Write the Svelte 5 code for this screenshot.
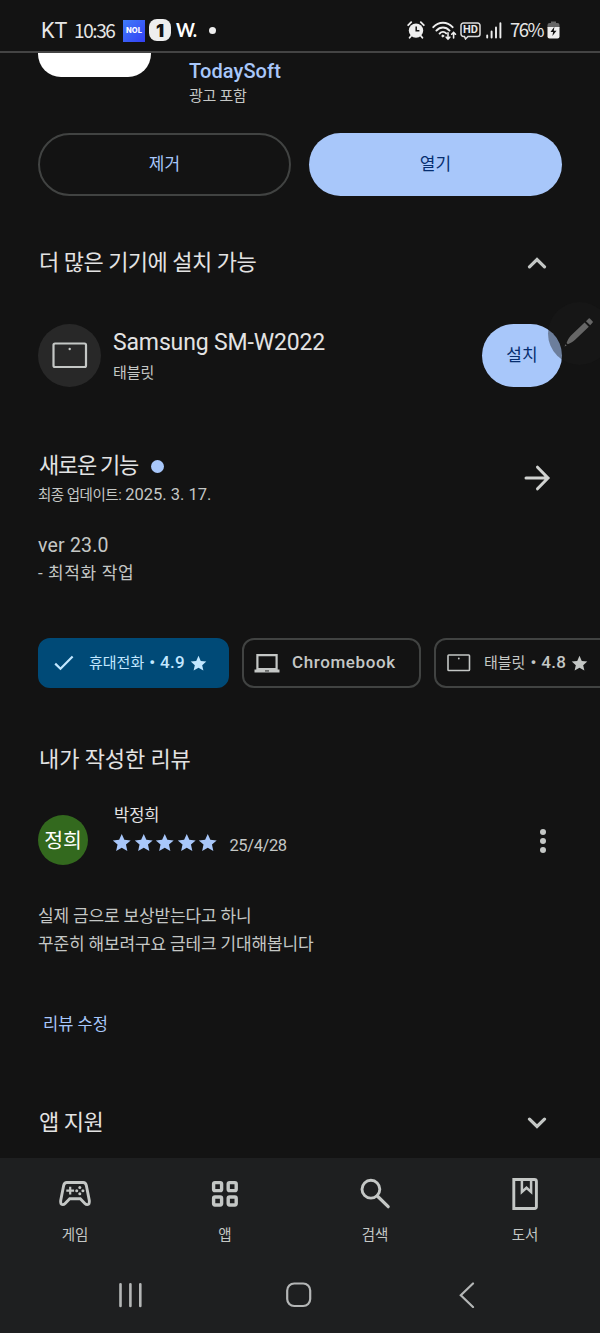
<script lang="ts">
	const starPath = 'M12 1.2l3.2 7.1 7.8.8-5.800 5.200 1.700 7.700L12 18l-6.900 4 1.700-7.700L1 9.100l7.800-.8z';

	const review = {
		initials: '정희',
		name: '박정희',
		rating: 5,
		date: '25/4/28',
		lines: ['실제 금으로 보상받는다고 하니', '꾸준히 해보려구요 금테크 기대해봅니다']
	};

	const tabs = [
		{ id: 'games', label: '게임' },
		{ id: 'apps', label: '앱' },
		{ id: 'search', label: '검색' },
		{ id: 'books', label: '도서' }
	];

	let devicesOpen = $state(true);
	let supportOpen = $state(false);
</script>

{#snippet star(size: number)}
	<svg class="star" width={size} height={size} viewBox="0 0 24 24" fill="currentColor">
		<path d={starPath} />
	</svg>
{/snippet}

{#snippet chevron(up: boolean)}
	<svg width="20" height="12" viewBox="0 0 20 12" fill="none" stroke="currentColor" stroke-width="3.2">
		<path d={up ? 'M2.5 9.800l7.500-7.300 7.500 7.300' : 'M2.5 2.200l7.500 7.300 7.500-7.300'} stroke-linecap="round" />
	</svg>
{/snippet}

<div class="screen">
	<header class="status-bar">
		<span class="carrier">KT</span>
		<span class="clock">10:36</span>
		<span class="nol">NOL</span>
		<span class="one">1</span>
		<span class="w">W.</span>
		<span class="more-dot"></span>

		<div class="status-right">
			<svg class="alarm" width="18" height="18" viewBox="0 0 18 18">
				<circle cx="9" cy="9.600" r="7.200" fill="#eee" />
				<path d="M1.200 4.200l3-3M16.800 4.200l-3-3M4 15l-1.400 1.800M14 15l1.400 1.800" stroke="#eee" stroke-width="1.800" stroke-linecap="round" />
				<path d="M9.200 5.600v4.200h3.200" fill="none" stroke="#131313" stroke-width="1.500" />
			</svg>
			<svg class="wifi" width="25" height="20" viewBox="0 0 25 20" fill="none" stroke="#eee" stroke-width="1.900" stroke-linecap="round">
				<path d="M1.300 6.200c5.400-6 13.900-6 19.300 0M4.400 9.600c3.700-4.200 9.500-4.200 13.100 0M7.600 12.600c1.900-2.200 4.800-2.200 6.600-.2" />
				<circle cx="10.800" cy="15" r="1" fill="#eee" stroke-width=".8" />
				<path d="M16 11.800v6M14.200 16.200l1.800 1.900 1.800-1.900M21.600 17v-5.600M19.700 13.200l1.900-1.900 1.900 1.900" stroke-width="1.600" />
			</svg>
			<span class="hd">
				<svg width="21" height="18" viewBox="0 0 21 18" fill="none" stroke="#ddd" stroke-width="1.500">
					<path d="M3.500 1h14a2.500 2.500 0 012.500 2.500v8.500a2.500 2.500 0 01-2.500 2.500H8l-2.500 2.500-1-2.500h-1A2.500 2.500 0 011 12V3.500A2.500 2.500 0 013.500 1z" />
				</svg>
				<b>HD</b>
			</span>
			<svg class="signal" width="16" height="17" viewBox="0 0 16 17" stroke="#eee" stroke-width="1.900" stroke-linecap="round">
				<path d="M1.200 13.500v2M5.600 9.500v6M10 5.500v10M14.400 1.200v14.300" />
			</svg>
			<span class="percent">76%</span>
			<svg class="battery" width="13" height="18" viewBox="0 0 13 18">
				<path d="M4 2V.6h5V2h1.500A2 2 0 0112.500 4v3H.5V4a2 2 0 012-2z" fill="#666" />
				<path d="M.5 6h12v9.500a2 2 0 01-2 2h-8a2 2 0 01-2-2z" fill="#eee" />
				<path d="M7.400 5.800L3.500 11h2.600l-.7 4 4.100-5.200H6.800z" fill="#131313" />
			</svg>
		</div>
	</header>

	<main>
		<section class="app-row">
			<div class="app-icon"></div>
			<div class="app-meta">
				<div class="developer">TodaySoft</div>
				<div class="ads">광고 포함</div>
			</div>
		</section>

		<div class="actions">
			<button type="button" class="outline">제거</button>
			<button type="button" class="filled">열기</button>
		</div>

		<section class="section-head devices-head">
			<h2>더 많은 기기에 설치 가능</h2>
			<button type="button" class="icon-btn" aria-label="toggle" onclick={() => (devicesOpen = !devicesOpen)}>
				{@render chevron(devicesOpen)}
			</button>
		</section>

		{#if devicesOpen}
			<section class="device">
				<div class="device-icon">
					<svg width="36" height="27" viewBox="0 0 36 27">
						<rect x="1.500" y="1.500" width="32.500" height="23.500" rx="1.500" fill="none" stroke="#c4c7c5" stroke-width="2.200" />
						<circle cx="17.700" cy="7" r="1.200" fill="#c4c7c5" />
					</svg>
				</div>
				<div class="device-text">
					<div class="device-name">Samsung SM-W2022</div>
					<div class="device-kind">태블릿</div>
				</div>
				<button type="button" class="install">설치</button>
				<div class="pen">
					<svg width="34" height="34" viewBox="0 0 34 34" fill="#666">
						<path d="M2.500 31.500l1-2.200 1.200 1.200zM4.600 28c1-3 2.200-5.400 4.400-7.600L22.600 7.600l4.200 4.200L13.400 24.600c-2.200 2.100-4.700 3.500-7.600 4.600zM24 6.300l2.700-2.700q.6-.5 1.200 0l2.800 2.800q.5.600 0 1.200l-2.500 2.700z" />
					</svg>
				</div>
			</section>
		{/if}

		<section class="whats-new">
			<div>
				<h2 class="new-title">새로운 기능<span class="new-dot"></span></h2>
				<div class="updated"><span>최종 업데이트:</span> 2025. 3. 17.</div>
			</div>
			<svg class="arrow" width="28" height="26" viewBox="0 0 28 26" fill="none" stroke="currentColor" stroke-width="3" stroke-linecap="round">
				<path d="M3 13h21.500M14.500 2.200L25 13 14.500 23.800" />
			</svg>
		</section>

		<div class="notes">
			<div class="version">ver 23.0</div>
			<div class="change">- 최적화 작업</div>
		</div>

		<div class="chips">
			<div class="chip selected">
				<svg class="check" width="20" height="16" viewBox="0 0 20 16" fill="none" stroke="currentColor" stroke-width="2.200">
					<path d="M1.200 8.600l5.300 5.200L18.600 1.600" />
				</svg>
				<span class="ko">휴대전화</span>
				<span class="score">• 4.9</span>
				{@render star(17)}
			</div>
			<div class="chip chromebook">
				<svg width="26" height="19" viewBox="0 0 26 19">
					<path d="M3.400 1.200h19.200v14H3.400z" fill="none" stroke="currentColor" stroke-width="2.200" />
					<path d="M.5 15.500h25v3H.5z" fill="currentColor" />
					<path d="M11 16.500h4v.9h-4z" fill="#131313" />
				</svg>
				<span class="en">Chromebook</span>
			</div>
			<div class="chip tablet">
				<svg width="24" height="18" viewBox="0 0 24 18">
					<rect x="1" y="1" width="21.500" height="15.500" rx=".8" fill="none" stroke="currentColor" stroke-width="1.600" />
					<circle cx="11.800" cy="4.500" r=".9" fill="currentColor" />
				</svg>
				<span class="ko">태블릿</span>
				<span class="score">• 4.8</span>
				{@render star(17)}
			</div>
		</div>

		<h2 class="my-review">내가 작성한 리뷰</h2>

		<section class="reviewer">
			<div class="avatar">{review.initials}</div>
			<div class="reviewer-text">
				<div class="reviewer-name">{review.name}</div>
				<div class="rating">
					{#each Array(review.rating) as _}
						{@render star(19.5)}
					{/each}
					<span class="date">{review.date}</span>
				</div>
			</div>
			<div class="kebab"><i></i><i></i><i></i></div>
		</section>

		<div class="review-body">
			{#each review.lines as line}
				<p>{line}</p>
			{/each}
		</div>

		<button type="button" class="edit">리뷰 수정</button>

		<section class="section-head support-head">
			<h2>앱 지원</h2>
			<button type="button" class="icon-btn" aria-label="toggle" onclick={() => (supportOpen = !supportOpen)}>
				{@render chevron(supportOpen)}
			</button>
		</section>
	</main>

	<footer>
		<nav class="tabs">
			{#each tabs as tab (tab.id)}
				<div class="tab">
					<svg width="34" height="34" viewBox="0 0 34 34" fill="none" stroke="currentColor" stroke-width="2.900">
						{#if tab.id === 'games'}
							<path d="M8.800 5.500h16.400q2.400 0 3.100 2.800l3 15.200q.5 4-2 4.100-1.300 0-2.400-1.100l-4.600-4.700H11.700l-4.600 4.700Q6 27.600 4.700 27.600q-2.500-.1-2-4.100l3-15.200q.7-2.800 3.100-2.800z" />
							<path d="M8.300 13.700h7.800M12.200 9.800v7.800" stroke-width="2.200" />
							<g fill="currentColor" stroke="none">
								<circle cx="21.800" cy="10.600" r="1.500" />
								<circle cx="21.800" cy="16.800" r="1.500" />
								<circle cx="18.700" cy="13.700" r="1.500" />
								<circle cx="24.900" cy="13.700" r="1.500" />
							</g>
						{:else if tab.id === 'apps'}
							<g stroke-width="3.400">
								<rect x="5.600" y="5.600" width="8" height="8" rx="1.400" />
								<rect x="20.200" y="5.600" width="8" height="8" rx="1.400" />
								<rect x="5.600" y="20" width="8" height="8" rx="1.400" />
								<rect x="20.200" y="20" width="8" height="8" rx="1.400" />
							</g>
						{:else if tab.id === 'search'}
							<circle cx="12.900" cy="12.200" r="8.900" />
							<path d="M19.300 19l10.900 10.700" stroke-width="3.200" stroke-linecap="round" />
						{:else}
							<path d="M5.800 2.500h20.600q2 0 2 2v25q0 2-2 2H5.800z" />
							<path d="M13.900 4v11l4.600-4.200L23.100 15V4" stroke-width="2.500" />
						{/if}
					</svg>
					<span>{tab.label}</span>
				</div>
			{/each}
		</nav>
		<div class="system-nav">
			<svg width="26" height="26" viewBox="0 0 26 26" fill="none" stroke="currentColor" stroke-width="2.600" stroke-linecap="round">
				<path d="M3.500 2.200v21.800M13.400 2.200v21.800M23.300 2.200v21.800" />
			</svg>
			<svg width="26" height="26" viewBox="0 0 26 26" fill="none" stroke="currentColor" stroke-width="2.200">
				<rect x="1.200" y="1.500" width="23" height="22.500" rx="7" />
			</svg>
			<svg width="26" height="26" viewBox="0 0 26 26" fill="none" stroke="currentColor" stroke-width="2.200" stroke-linecap="round">
				<path d="M19 1.500L6.800 13.200 19 25" />
			</svg>
		</div>
	</footer>
</div>

<style>
	:global(body) {
		background: #131313;
	}

	.screen {
		display: flex;
		flex-direction: column;
		width: 600px;
		height: 1333px;
		overflow: hidden;
		background: #131313;
		color: #e3e3e3;
		font-family: Roboto, 'Noto Sans CJK KR', sans-serif;
	}

	h2,
	p {
		margin: 0;
		font-weight: 400;
	}

	button {
		padding: 0;
		border: none;
		background: transparent;
		color: inherit;
		font: inherit;
	}

	svg {
		display: block;
		flex: none;
	}

	.status-bar {
		display: flex;
		align-items: center;
		box-sizing: border-box;
		height: 53px;
		padding: 9px 40px 0 41px;
		border-bottom: 2px solid #444;
		color: #e6e6e6;
		white-space: nowrap;
	}

	.carrier {
		width: 33px;
		font-size: 21.5px;
	}

	.clock {
		width: 49px;
		margin-top: -2px;
		font-family: 'Noto Sans CJK KR', sans-serif;
		font-size: 19px;
		letter-spacing: -1.4px;
	}

	.nol {
		display: grid;
		place-items: center;
		width: 22px;
		height: 22px;
		margin: 1px 4px 0 0;
		background: linear-gradient(135deg, #3f7cf8, #3340f5);
		color: #fff;
		font: 800 7.5px Inter, sans-serif;
	}

	.one {
		display: grid;
		place-items: center;
		width: 22px;
		height: 22px;
		margin-right: 5px;
		border-radius: 8px;
		background: #eee;
		color: #131313;
		font: 900 18px Inter, sans-serif;
	}

	.w {
		width: 33px;
		color: #fff;
		font: 700 18px Lato, sans-serif;
		letter-spacing: -1.3px;
	}

	.more-dot {
		width: 7px;
		height: 7px;
		border-radius: 50%;
		background: #eee;
	}

	.status-right {
		display: flex;
		align-items: center;
		margin-left: auto;
	}

	.alarm {
		margin-right: 7px;
	}

	.wifi {
		margin: 2px 3px 0 0;
	}

	.hd {
		display: grid;
		margin: 1px 5px 0 0;
	}

	.hd svg,
	.hd b {
		grid-area: 1 / 1;
	}

	.hd b {
		padding-top: 1.5px;
		font: 700 11px/13px Roboto, sans-serif;
		text-align: center;
	}

	.signal {
		margin-right: 8px;
	}

	.percent {
		width: 37px;
		margin-top: -2px;
		font-family: 'Noto Sans CJK KR', sans-serif;
		font-size: 18.5px;
		letter-spacing: -1.5px;
	}

	main {
		flex: 1;
		display: flex;
		flex-direction: column;
		padding: 0 38px;
		min-height: 0;
	}

	.app-row {
		display: flex;
		height: 80px;
	}

	.app-icon {
		width: 113px;
		height: 24px;
		margin-right: 38px;
		border-radius: 0 0 23px 23px;
		background: #fff;
	}

	.app-meta {
		padding-top: 6px;
	}

	.developer {
		color: #a8c7fa;
		font-size: 20px;
		font-weight: 500;
		line-height: 24px;
		letter-spacing: 0.1px;
	}

	.ads {
		margin-top: 3px;
		color: #c4c7c5;
		font-size: 15px;
		line-height: 20px;
		letter-spacing: -0.3px;
	}

	.actions {
		display: grid;
		grid-template-columns: 253px 253px;
		gap: 18px;
		height: 63px;
		font-size: 17px;
	}

	.actions button,
	.install {
		padding-bottom: 4px;
	}

	.outline {
		border: 2px solid #414342;
		border-radius: 32px;
		color: #a8c7fa;
	}

	.filled,
	.install {
		border-radius: 32px;
		background: #a8c7fa;
		color: #062e6f;
	}

	.section-head {
		display: flex;
		align-items: center;
		justify-content: space-between;
		height: 44px;
		padding-right: 15px;
	}

	.devices-head {
		margin-top: 45px;
	}

	h2 {
		padding-left: 1px;
		font-size: 22px;
		line-height: 28px;
		letter-spacing: -0.5px;
	}

	.icon-btn {
		color: #c4c7c5;
	}

	.device {
		position: relative;
		display: flex;
		height: 63px;
		margin-top: 39px;
	}

	.device-icon {
		display: grid;
		place-items: center;
		width: 63px;
		height: 63px;
		border-radius: 50%;
		background: #282828;
	}

	.device-text {
		flex: 1;
		padding: 5px 0 0 12px;
	}

	.device-name {
		font-size: 23px;
		line-height: 28px;
		letter-spacing: -0.15px;
	}

	.device-kind {
		margin-top: 5px;
		color: #c4c7c5;
		font-size: 15px;
		line-height: 22px;
	}

	.install {
		width: 80px;
		font-size: 17px;
	}

	/* floating stylus shortcut, hangs over the screen edge */
	.pen {
		position: absolute;
		top: -22px;
		left: 510px;
		display: flex;
		align-items: center;
		box-sizing: border-box;
		width: 63px;
		height: 63px;
		padding: 0 0 4px 14px;
		border-radius: 50%;
		background: rgba(27, 27, 27, 0.42);
	}

	.whats-new {
		display: flex;
		justify-content: space-between;
		margin-top: 65px;
		padding-right: 11px;
	}

	.new-title {
		display: flex;
		align-items: center;
		letter-spacing: -1.3px;
	}

	.new-dot {
		width: 13px;
		height: 13px;
		margin: 1px 0 0 13px;
		border-radius: 50%;
		background: #a8c7fa;
	}

	.updated {
		margin-top: 1px;
		color: #c4c7c5;
		font-size: 16.5px;
		line-height: 28px;
	}

	.updated span {
		font-size: 14.5px;
		letter-spacing: -0.5px;
	}

	.arrow {
		margin-top: 13px;
		color: #d0d2d0;
	}

	.notes {
		margin-top: 22px;
		color: #c4c7c5;
		line-height: 28px;
	}

	.version {
		font-size: 19.5px;
		letter-spacing: 0.2px;
	}

	.change {
		margin-top: -1px;
		font-size: 17px;
		letter-spacing: 0.6px;
	}

	.chips {
		display: flex;
		gap: 13px;
		margin: 51px -38px 0 0;
		overflow: hidden;
	}

	.chip {
		display: flex;
		flex: none;
		align-items: center;
		box-sizing: border-box;
		height: 50px;
		border: 2px solid #414342;
		border-radius: 12px;
		color: #c4c7c5;
		font-size: 17px;
		font-weight: 500;
		white-space: nowrap;
	}

	.chip span {
		padding-bottom: 2px;
	}

	.chip .ko {
		padding-bottom: 4px;
		font-size: 15px;
		font-weight: 400;
	}

	.chip .score {
		margin: 0 5px 0 5px;
		letter-spacing: 0.3px;
	}

	.chip.selected {
		width: 191px;
		padding-left: 14px;
		border-color: #004a77;
		background: #004a77;
		color: #c2e7ff;
	}

	.check {
		margin-right: 15px;
	}

	.chip.chromebook {
		width: 179px;
		padding-left: 10px;
	}

	.en {
		margin-left: 12px;
		letter-spacing: 0.6px;
	}

	.chip.tablet {
		width: 200px;
		padding-left: 11px;
	}

	.chip.tablet .ko {
		margin-left: 13px;
	}

	.my-review {
		margin-top: 58px;
		letter-spacing: -0.1px;
	}

	.reviewer {
		display: flex;
		align-items: center;
		height: 75px;
		margin-top: 29px;
		padding-right: 16px;
	}

	.avatar {
		display: grid;
		place-items: center;
		box-sizing: border-box;
		width: 50px;
		height: 50px;
		margin: -1px 25px 0 0;
		padding-bottom: 3px;
		border-radius: 50%;
		background: #33691e;
		color: #fff;
		font-size: 20.5px;
	}

	.reviewer-text {
		flex: 1;
		align-self: flex-start;
	}

	.reviewer-name {
		padding: 1px 0 0 1px;
		font-size: 16.5px;
		line-height: 24px;
	}

	.rating {
		display: flex;
		align-items: center;
		gap: 2px;
		height: 30px;
		margin-top: 0;
		margin-left: -1px;
		color: #a8c7fa;
	}

	.date {
		margin: 4px 0 0 10px;
		color: #c4c7c5;
		font-size: 16.5px;
		letter-spacing: -0.4px;
	}

	.kebab {
		display: flex;
		flex-direction: column;
		gap: 3px;
	}

	.kebab i {
		width: 6px;
		height: 6px;
		border-radius: 50%;
		background: #c4c7c5;
	}

	.review-body {
		margin-top: 24px;
		color: #c4c7c5;
		font-size: 17px;
		line-height: 28px;
		letter-spacing: -0.15px;
	}

	.edit {
		align-self: flex-start;
		margin: 55px 0 0 5px;
		color: #a8c7fa;
		font-size: 16.5px;
		line-height: 24px;
	}

	.support-head {
		margin-top: 64px;
	}

	footer {
		flex: none;
		box-sizing: border-box;
		height: 175px;
		background: #1e1f20;
		color: #c4c7c5;
	}

	.tabs {
		display: grid;
		grid-template-columns: repeat(4, 1fr);
		box-sizing: border-box;
		height: 99px;
		padding-top: 19px;
	}

	.tab {
		display: flex;
		flex-direction: column;
		align-items: center;
		gap: 14px;
		font-size: 14.5px;
		line-height: 22px;
	}

	.system-nav {
		display: flex;
		justify-content: space-between;
		padding: 25px 120px 0 117px;
		color: #b4b6b6;
	}
</style>
